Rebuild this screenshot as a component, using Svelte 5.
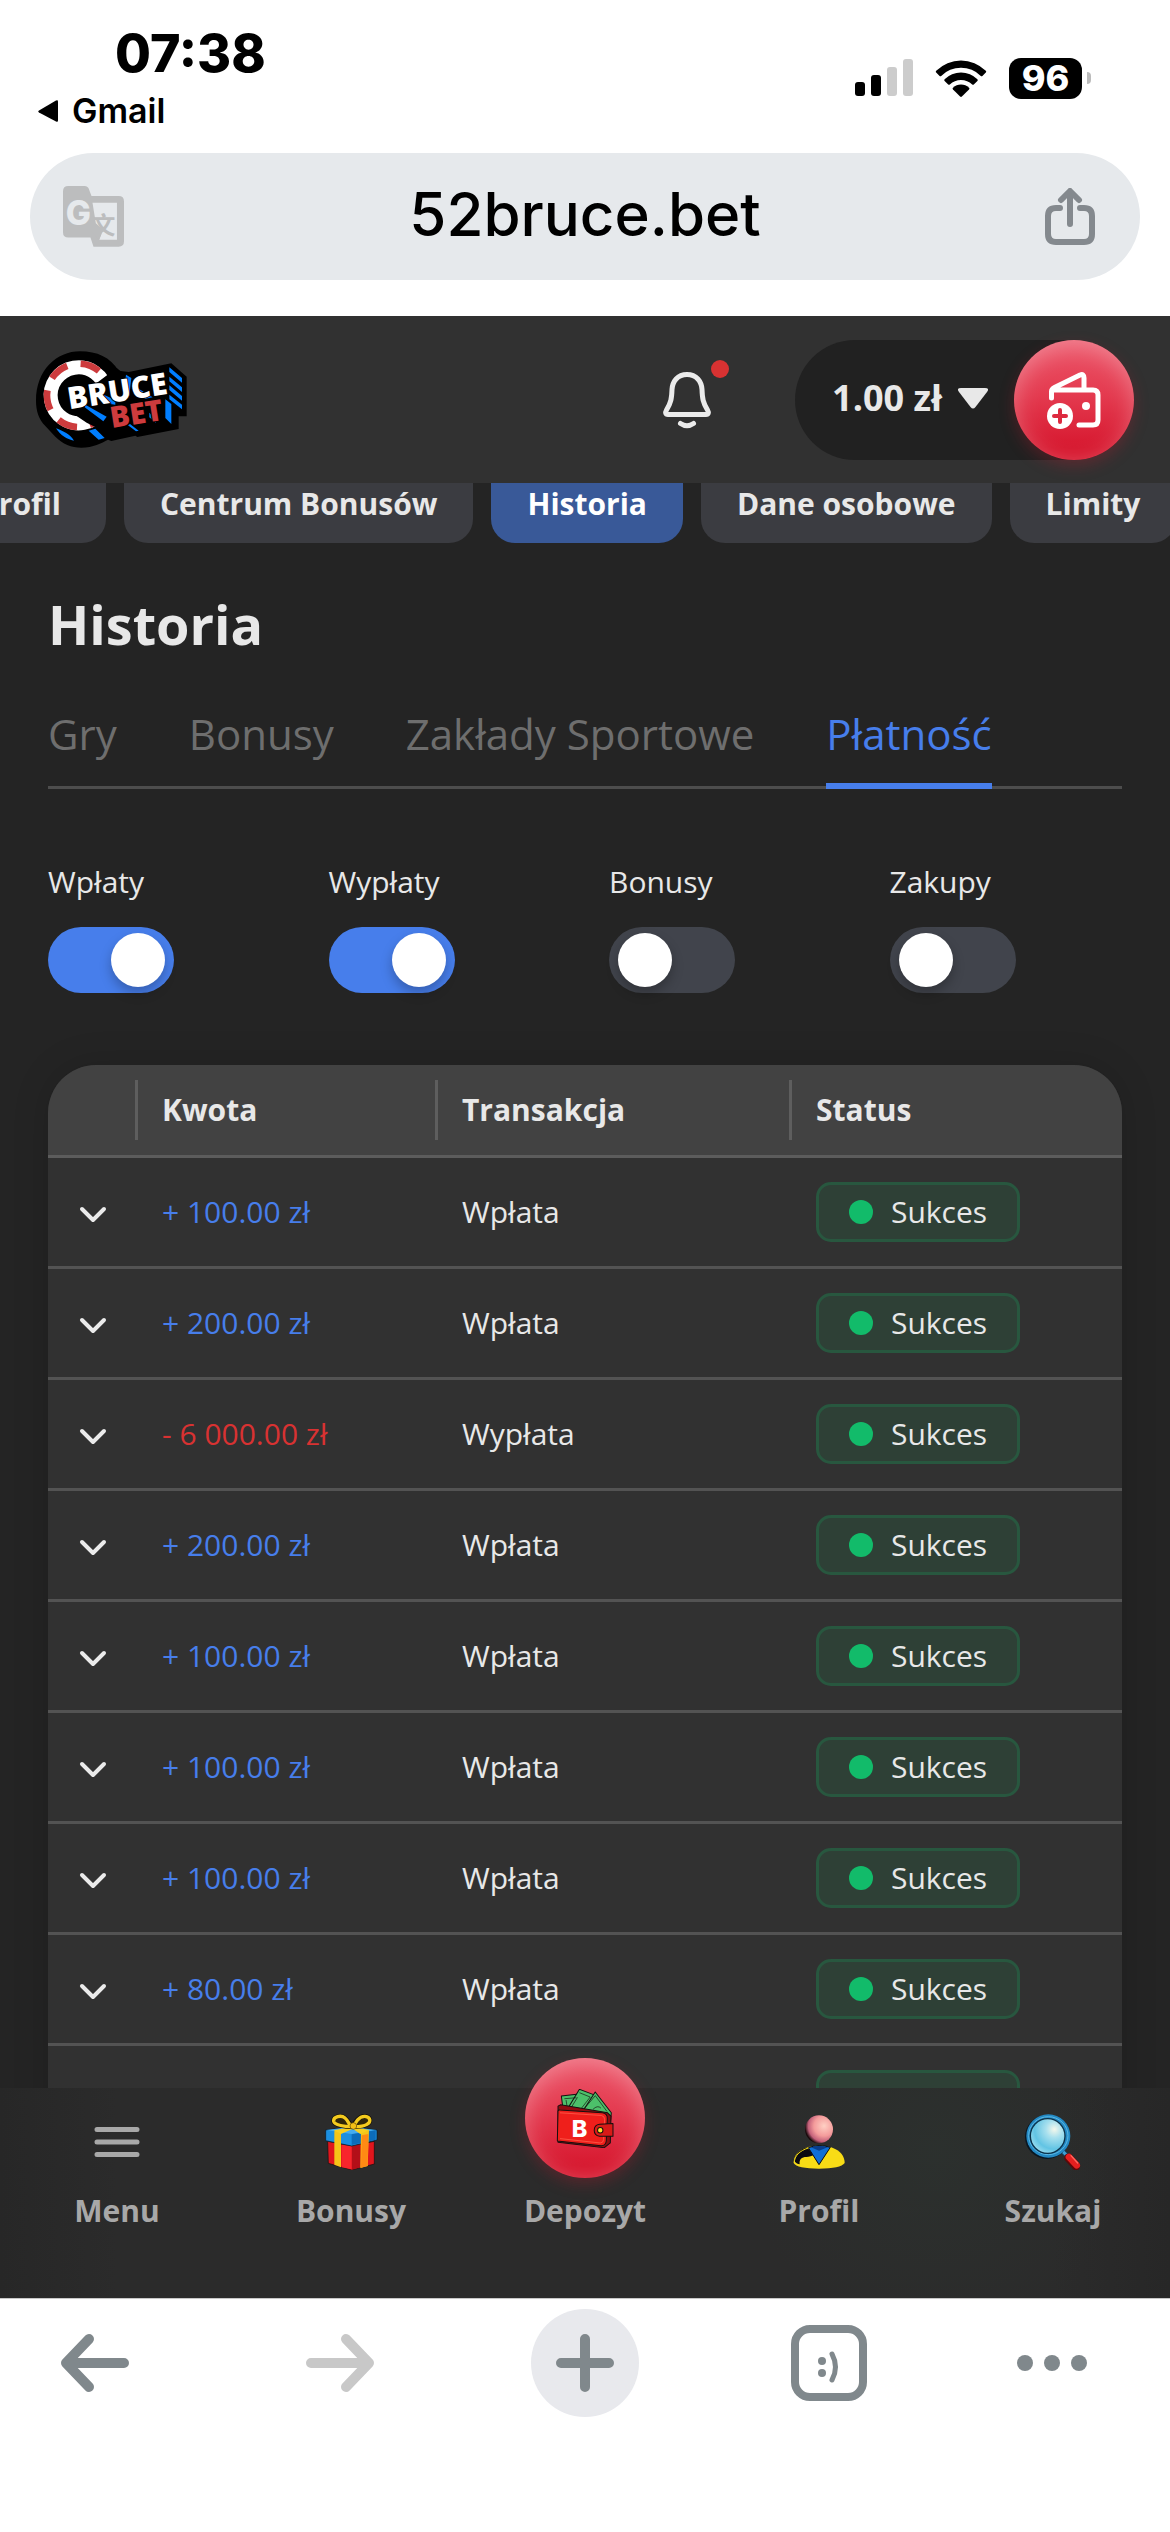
<script>
  const sections = ['Profil', 'Centrum Bonusów', 'Historia', 'Dane osobowe', 'Limity'];
  const tabs = ['Gry', 'Bonusy', 'Zakłady Sportowe', 'Płatność'];
  let filters = $state([
    { id: 'deposits', label: 'Wpłaty', on: true },
    { id: 'withdrawals', label: 'Wypłaty', on: true },
    { id: 'bonuses', label: 'Bonusy', on: false },
    { id: 'purchases', label: 'Zakupy', on: false }
  ]);
  const rows = [
    { amount: '+ 100.00 zł', type: 'Wpłata' },
    { amount: '+ 200.00 zł', type: 'Wpłata' },
    { amount: '- 6 000.00 zł', type: 'Wypłata' },
    { amount: '+ 200.00 zł', type: 'Wpłata' },
    { amount: '+ 100.00 zł', type: 'Wpłata' },
    { amount: '+ 100.00 zł', type: 'Wpłata' },
    { amount: '+ 100.00 zł', type: 'Wpłata' },
    { amount: '+ 80.00 zł', type: 'Wpłata' },
    { amount: '+ 100.00 zł', type: 'Wpłata' }
  ];
</script>

<div class="screen">
  <div class="status">
    <div class="status-left">
      <time>07:38</time>
      <a class="back-app" href="#gmail">
        <svg width="22" height="22" viewBox="0 0 22 22" aria-hidden="true"><path d="M20 1.500v19q0 2-2 1L1 12.500q-1.500-1 0-2L18 .5q2-1 2 1z" /></svg>
        Gmail
      </a>
    </div>
    <div class="status-right">
      <svg width="58" height="38" viewBox="0 0 58 38" aria-hidden="true">
        <rect x="0" y="23" width="10" height="14" rx="3" />
        <rect x="16" y="16" width="10" height="21" rx="3" />
        <rect x="32" y="8" width="10" height="29" rx="3" fill="#ccc" />
        <rect x="48" y="0" width="10" height="37" rx="3" fill="#ccc" />
      </svg>
      <svg width="52" height="38" viewBox="0 0 52 38" aria-hidden="true">
        <path d="M1.200 11.800a35 35 0 0 1 49.600 0q.8.900 0 1.700l-3.400 3.400q-.8.700-1.600 0a28 28 0 0 0-39.600 0q-.8.700-1.600 0l-3.400-3.400q-.8-.8 0-1.700z" />
        <path d="M9.600 20.300a23.200 23.200 0 0 1 32.800 0q.8.900 0 1.700l-3.600 3.500q-.8.700-1.600 0a16 16 0 0 0-22.400 0q-.8.700-1.600 0L9.600 22q-.8-.8 0-1.700z" />
        <path d="M18 28.700a11.500 11.500 0 0 1 16 0q.9.900 0 1.800l-7.100 7q-.9.800-1.800 0l-7.100-7q-.9-.9 0-1.800z" />
      </svg>
      <div class="battery"><span>96</span></div>
    </div>
  </div>

  <div class="address">
    <button class="plain" aria-label="Translate">
      <svg width="61" height="61" viewBox="38 47 182 182" aria-hidden="true">
        <path fill="#bcbdbe" d="M54 47h48q11 0 14 11l7 19h81q16 0 16 16v119q0 16-16 16h-75l-9-27H54q-16 0-16-16V63q0-16 16-16z" />
        <path fill="#e6e9ec" d="M126 97h73v110h-53l12-29-22-20z" />
        <text class="cjk" x="122" y="189" font-size="72" fill="#bcbdbe">文</text>
        <path fill="#bcbdbe" d="M120 180h30l2 10-6 17z" />
        <text class="glyph" x="46" y="162" font-size="100" fill="#e6e9ec">G</text>
      </svg>
    </button>
    <span class="url">52bruce.bet</span>
    <button class="plain share" aria-label="Share">
      <svg width="52" height="58" viewBox="0 0 52 58" fill="none" stroke="#84898e" stroke-width="6" stroke-linecap="round" stroke-linejoin="round" aria-hidden="true">
        <path d="M26 36V4M17 12l9-9 9 9M16 20h-4q-8 0-8 8v18q0 8 8 8h28q8 0 8-8V28q0-8-8-8h-4" />
      </svg>
    </button>
  </div>

  <div class="site">
    <header>
      <a class="logo" href="#home" aria-label="Bruce Bet">
        <svg width="151" height="97" viewBox="48 61 453 291" aria-hidden="true">
          <path d="M180 62c-70 0-132 56-132 148 0 30 8 56 28 76l30 32c22 22 48 33 78 33 36 0 60-14 80-24l10 4 72-16 6 4 124-24v-38h24V138l-46-40-128 26-30-4C270 80 232 62 180 62z" />
          <circle cx="176" cy="194" r="84" fill="none" stroke="#fff" stroke-width="42" stroke-dasharray="468 60" transform="rotate(35 176 194)" />
          <circle cx="176" cy="194" r="95" fill="none" stroke="#cd3b3d" stroke-width="20" stroke-dasharray="60 39" stroke-dashoffset="60" transform="rotate(-110 176 194)" />
          <path d="M210 172l80-60 30 24 110-20 10 140-180 50-60-30-60-40z" />
          <path fill="#007eff" d="M108 293c22 8 42 18 54 37-22-4-40-16-54-37zM206 300l20-6 28 28-18 5zM196 222l64 36-10 14-56-42zM246 190l40 18v14l-30-4zM318 132l16 10-6 54-14-30zM348 170l50 30-22 4-30-16zM448 110l38 32v14l-38-32zM448 138l38 32v14l-38-32zM448 164l38 32v14l-38-32zM448 192l38 30v14l-38-30zM436 206l18 14v60l-18-18zM388 246l20 18v12l-20-16zM330 280l26 20-8 2-24-18z" />
          <g class="mark" stroke="#000" stroke-width="5" paint-order="stroke">
            <text x="0" y="0" font-size="91" fill="#fff" transform="translate(148 236) rotate(-9)">BRUCE</text>
            <text x="0" y="0" font-size="88" fill="#cd3b3d" transform="translate(275 292) rotate(-9)">BET</text>
          </g>
        </svg>
      </a>
      <button class="plain bell" aria-label="Powiadomienia">
        <svg width="50" height="58" viewBox="0 0 50 58" fill="none" stroke="#ebebeb" stroke-width="5" stroke-linecap="round" stroke-linejoin="round" aria-hidden="true">
          <path d="M25 3.500c-9.500 0-14.500 7-15 15-.3 9-1 13-5.500 20.500-1.500 2.600-1 4.500 1.500 4.500h38c2.500 0 3-1.900 1.500-4.500C41 31.500 40.300 27.500 40 18.500c-.5-8-5.500-15-15-15z" />
          <path d="M18.500 52.500q6.500 4.500 13 0" />
        </svg>
        <i></i>
      </button>
      <div class="balance">
        <button class="plain sum">
          1.00 zł
          <svg width="30" height="21" viewBox="0 0 30 21" aria-hidden="true"><path fill="#e8e8e8" d="M3 0h24q5 0 2 4L17.500 19q-2.500 3-5 0L1 4q-3-4 2-4z" /></svg>
        </button>
        <button class="red" aria-label="Wpłać">
          <svg width="56" height="58" viewBox="0 0 56 58" fill="none" stroke="#fff" stroke-width="5" stroke-linecap="round" stroke-linejoin="round" aria-hidden="true">
            <path d="M5.500 27v-6.500q0-2.500 3-4L34 4q4-1.500 4 3v11M6 19h41q5 0 5 5v25q0 5-5 5H33" />
            <circle cx="40" cy="35" r="4" fill="#fff" stroke="none" />
            <circle cx="14" cy="45" r="13" fill="#fff" stroke="none" />
            <path stroke="#dd2a40" stroke-width="4" d="M14 39v12M8 45h12" />
          </svg>
        </button>
      </div>
    </header>

    <main>
      <nav class="sections">
        {#each sections as name}
          <a href="#section" class:active={name === 'Historia'}>{name}</a>
        {/each}
      </nav>

      <div class="content">
        <h1>Historia</h1>
        <nav class="tabs">
          {#each tabs as name}
            <a href="#tab" class:active={name === 'Płatność'}>{name}</a>
          {/each}
        </nav>

        <div class="filters">
          {#each filters as filter}
            <div class="filter">
              <label for={filter.id}>{filter.label}</label>
              <input id={filter.id} type="checkbox" role="switch" bind:checked={filter.on} />
            </div>
          {/each}
        </div>

        <div class="card">
          <table>
            <colgroup><col class="c1" /><col class="c2" /><col class="c3" /><col /></colgroup>
            <thead>
              <tr><th aria-label="Szczegóły"></th><th>Kwota</th><th>Transakcja</th><th>Status</th></tr>
            </thead>
            <tbody>
              {#each rows as row}
                <tr>
                  <td class="toggle">
                    <button class="plain" aria-label="Rozwiń">
                      <svg width="28" height="18" viewBox="0 0 28 18" fill="none" stroke="#ebebeb" stroke-width="4" stroke-linecap="round" stroke-linejoin="round" aria-hidden="true"><path d="M3 4l11 11L25 4" /></svg>
                    </button>
                  </td>
                  <td class={row.amount.startsWith('-') ? 'minus' : 'plus'}>{row.amount}</td>
                  <td>{row.type}</td>
                  <td><span class="badge"><i></i>Sukces</span></td>
                </tr>
              {/each}
            </tbody>
          </table>
        </div>
      </div>
    </main>

    <nav class="dock">
      <a href="#menu">
        <svg width="56" height="56" viewBox="0 0 56 56" stroke="#a8a8a8" stroke-width="5" stroke-linecap="round" aria-hidden="true"><path d="M8 15.500h40M8 28h40M8 40.500h40" /></svg>
        Menu
      </a>
      <a href="#bonusy">
        <svg width="56" height="56" viewBox="42 192 168 168" stroke-linejoin="round" aria-hidden="true">
          <path fill="#e0161d" stroke="#111" stroke-width="2" d="M56 274l72 14 68-14v68l-68 18-70-20z" />
          <path fill="#b30f18" d="M128 288l26-6v70l-26 7z" />
          <path fill="#f8252c" d="M98 284l30 5v69l-30-6z" />
          <path fill="#1b8fe0" stroke="#0a1520" stroke-width="2" d="M50 240l76-10 78 10v30l-76 18-78-16z" />
          <path fill="#45adf0" d="M52 240l74-9 76 9-74 12z" />
          <path fill="#0c6cba" d="M128 253l72-12v28l-72 16z" />
          <path fill="#f5c518" d="M76 244l20-6v114l-20-8zM156 244l24-4-4 108-22 6z" />
          <path fill="#ff8a14" d="M158 256l20-4-2 96-20 5z" />
          <path fill="#f7cf1f" d="M74 241l54-10 14 1-46 20zM138 231l42 9-26 12-26-18z" />
          <path fill="none" stroke="#15110a" stroke-width="14" d="M128 230c-16 0-52-4-54-16-2-14 22-20 34-10 8 6 14 18 20 26zM134 230c0-10 16-32 34-31 18 2 18 18 6 24-12 7-26 7-40 7z" />
          <path fill="#302709" stroke="#f4cb1e" stroke-width="10" d="M126 230c-16 0-50-4-52-16-2-14 22-20 34-10 8 6 12 18 18 26zM136 230c0-10 14-32 32-31 18 2 18 18 6 24-12 7-24 7-38 7z" />
          <circle cx="133" cy="228" r="10" fill="#f3bf16" stroke="#5c4300" stroke-width="2" />
        </svg>
        Bonusy
      </a>
      <a href="#depozyt">
        <span class="red raised">
          <svg width="59" height="59" viewBox="738 117 176 176" stroke="#151010" stroke-width="3" stroke-linejoin="round" aria-hidden="true">
            <g fill="#4cc06a">
              <path d="M754 138l52-6 10 54h-56z" />
              <path d="M808 118l48 18-20 54-66-10z" />
              <path d="M855 126l48 62-2 22-84-26z" />
              <path fill="none" stroke-width="2" d="M763 146l36-3M808 128l32 13-28 36M856 138l34 46M780 178l22-36M822 176l34-40M768 150l4 26M848 178q14-14 24-4" />
            </g>
            <path fill="#8f0c10" d="M744 168l8-4 140 24 10 10-2 80-18 14-138-16z" />
            <path fill="#ef1f1b" d="M744 184q0-5 6-4l126 8q16 2 15 18l-3 66q-2 15-16 14l-130-14z" />
            <path fill="none" stroke="#ff6a55" stroke-width="2" d="M750 188l124 8q9 2 9 12l-3 60q-1 10-10 10l-120-13" />
            <path fill="#d81a17" d="M908 220v38h-40q-16-2-16-18t16-18z" />
            <circle cx="870" cy="240" r="8" fill="#ffe32e" />
            <text class="glyph" x="785" y="259" font-size="70" fill="#fff" stroke="none">B</text>
          </svg>
        </span>
        Depozyt
      </a>
      <a href="#profil">
        <svg width="56" height="56" viewBox="64 101 168 168" aria-hidden="true">
          <defs>
            <radialGradient id="head" cx=".68" cy=".38" r=".72"><stop offset="0" stop-color="#ffd0c4" /><stop offset=".5" stop-color="#f49b9b" /><stop offset=".78" stop-color="#c2607a" /><stop offset=".95" stop-color="#1a0a0c" /></radialGradient>
          </defs>
          <circle cx="148" cy="147" r="42" fill="url(#head)" />
          <path fill="#f8dc16" d="M72 248c0-24 18-52 76-52s77 28 77 52c-8 11-34 17-77 17s-70-6-76-17z" />
          <path fill="#0b0b10" d="M112 201c-22 6-36 22-38 42 6 6 10 8 16 9-2-16 6-22 20-22 8 0 18-4 24-6z" />
          <path fill="#0f6fd6" stroke="#0b0b10" stroke-width="3" d="M116 202q32-12 66-1l-34 52z" />
          <path fill="#0a3d8a" d="M124 201q24-8 50 0l-26 10z" />
          <path fill="none" stroke="#f8dc16" stroke-width="3" d="M116 203c-26 8-42 24-42 44" />
        </svg>
        Profil
      </a>
      <a href="#szukaj">
        <svg width="56" height="56" viewBox="766 101 168 168" aria-hidden="true">
          <defs>
            <radialGradient id="lens" cx=".7" cy=".3" r=".85"><stop offset="0" stop-color="#f4f8ec" /><stop offset=".3" stop-color="#a8e0ee" /><stop offset=".7" stop-color="#62c4e4" /><stop offset="1" stop-color="#a5e2f2" /></radialGradient>
          </defs>
          <path stroke="#15384f" stroke-width="16" d="M874 208l20 20" />
          <path stroke="#3c9fd4" stroke-width="9" d="M874 208l20 20" />
          <path stroke="#5b0909" stroke-width="25" stroke-linecap="round" d="M896 232l23 26" />
          <path stroke="#e51f1f" stroke-width="20" stroke-linecap="round" d="M898 230l23 25" />
          <path stroke="#ff6a60" stroke-width="4" stroke-linecap="round" d="M904 226l20 22" />
          <ellipse cx="832" cy="170" rx="66" ry="66" fill="#091722" />
          <ellipse cx="836" cy="167" rx="66" ry="65" fill="#2389c4" />
          <ellipse cx="836" cy="166" rx="59" ry="57" fill="none" stroke="#5bb7e2" stroke-width="3" />
          <ellipse cx="834" cy="167" rx="54" ry="54" fill="#0c3149" />
          <ellipse cx="834" cy="167" rx="50" ry="50" fill="url(#lens)" />
        </svg>
        Szukaj
      </a>
    </nav>
  </div>

  <div class="toolbar">
    <button class="plain tool" aria-label="Back">
      <svg width="70" height="58" viewBox="0 0 70 58" fill="none" stroke="#80888c" stroke-width="10" stroke-linecap="round" stroke-linejoin="round" aria-hidden="true"><path d="M64 29H7M29 5L6 29l23 24" /></svg>
    </button>
    <button class="plain tool" aria-label="Forward" disabled>
      <svg width="70" height="58" viewBox="0 0 70 58" fill="none" stroke="#c8c8c8" stroke-width="10" stroke-linecap="round" stroke-linejoin="round" aria-hidden="true"><path d="M6 29h57M41 5l23 24-23 24" /></svg>
    </button>
    <button class="plain tool add" aria-label="New tab">
      <svg width="58" height="58" viewBox="0 0 58 58" stroke="#80888c" stroke-width="10" stroke-linecap="round" aria-hidden="true"><path d="M5 29h48M29 5v48" /></svg>
    </button>
    <button class="plain tool" aria-label="Tabs">
      <svg width="76" height="76" viewBox="0 0 76 76" fill="none" stroke="#80888c" aria-hidden="true">
        <rect x="4" y="4" width="68" height="68" rx="15" stroke-width="8" />
        <circle cx="31" cy="36" r="4" fill="#80888c" stroke="none" />
        <circle cx="31" cy="48" r="4" fill="#80888c" stroke="none" />
        <path d="M41 29q7 13 0 26" stroke-width="5" stroke-linecap="round" />
      </svg>
    </button>
    <button class="plain tool more" aria-label="More">
      <svg width="70" height="18" viewBox="0 0 70 18" fill="#80888c" aria-hidden="true"><circle cx="8" cy="9" r="8" /><circle cx="35" cy="9" r="8" /><circle cx="62" cy="9" r="8" /></svg>
    </button>
  </div>
</div>

<style>
  :global(body) { background: #fff; }
  .screen {
    display: flex;
    flex-direction: column;
    height: 100vh;
    overflow: hidden;
    box-sizing: border-box;
    font-family: "Open Sans", "Noto Sans", sans-serif;
    font-size: 30px;
    line-height: 42px;
    color: #e8e8e8;
  }
  .screen * { box-sizing: border-box; }
  svg { display: block; flex: none; }
  a { color: inherit; text-decoration: none; }
  .plain {
    display: flex;
    align-items: center;
    justify-content: center;
    padding: 0;
    border: 0;
    background: none;
    font: inherit;
    color: inherit;
  }

  .status {
    display: flex;
    justify-content: space-between;
    padding: 24px 79px 21px 38px;
    font-family: Inter, "Liberation Sans", sans-serif;
    color: #000;
  }
  .status-left { display: flex; flex-direction: column; gap: 6px; }
  time { padding-left: 77px; font-size: 52px; line-height: 60px; font-weight: 800; }
  .back-app { display: flex; align-items: center; gap: 12px; font-size: 34px; font-weight: 600; }
  .status-right { display: flex; align-items: center; gap: 22px; }
  .battery { display: flex; align-items: center; gap: 5px; }
  .battery span {
    width: 73px;
    border-radius: 12px;
    background: #000;
    color: #fff;
    font-size: 36px;
    line-height: 41px;
    font-weight: 800;
    text-align: center;
  }
  .battery::after { content: ""; width: 4px; height: 12px; border-radius: 0 4px 4px 0; background: #bbb; }

  .address {
    display: grid;
    grid-template-columns: 1fr auto 1fr;
    align-items: center;
    justify-items: start;
    height: 127px;
    margin: 0 30px 36px;
    padding: 0 33px;
    border-radius: 64px;
    background: #e6e9ec;
    flex: none;
  }
  .url { padding-bottom: 6px; font-family: Inter, "Liberation Sans", sans-serif; font-size: 60px; line-height: 72px; font-weight: 500; color: #000; }
  .share { justify-self: end; margin-right: 11px; }
  .cjk { font-family: "Noto Sans CJK SC", sans-serif; font-weight: 700; }
  .glyph { font-family: Inter, sans-serif; font-weight: 800; }
  .mark { font-family: "Open Sans", sans-serif; font-weight: 800; }

  .site {
    display: flex;
    flex-direction: column;
    flex: 1;
    min-height: 0;
    background: #242424;
  }
  header {
    display: flex;
    align-items: center;
    height: 167px;
    padding: 0 36px;
    background: #313131;
    flex: none;
  }
  .logo { margin-right: auto; }
  .bell { position: relative; margin-right: 83px; }
  .bell i { position: absolute; top: -11px; right: -17px; width: 18px; height: 18px; border-radius: 50%; background: #d83232; }
  .balance { display: flex; align-items: center; gap: 26px; padding-left: 37px; border-radius: 60px; background: #212121; }
  .sum { gap: 16px; padding-bottom: 3px; font-size: 36px; line-height: 48px; font-weight: 700; }
  .red {
    display: flex;
    align-items: center;
    justify-content: center;
    width: 120px;
    height: 120px;
    padding: 0;
    border: 0;
    border-radius: 50%;
    background: linear-gradient(#ec5468, #e43b50 45%, #d7182f 90%);
    box-shadow: inset 0 6px 24px rgba(255, 255, 255, 0.3), 0 6px 15px rgba(215, 24, 47, 0.25);
  }

  main { flex: 1; min-height: 0; overflow: hidden; }
  .sections { display: flex; gap: 18px; margin-left: -56px; }
  .sections a {
    flex: none;
    padding: 0 36px 18px;
    border-radius: 0 0 24px 24px;
    background: #3b3c41;
    font-weight: 700;
  }
  .sections a:first-child { padding-right: 45px; }
  .sections .active { background: #395998; color: #fff; }
  .content { padding: 45px 48px 0; }
  h1 { margin: 0 0 44px; font-size: 54px; line-height: 72px; font-weight: 700; }
  .tabs { display: flex; gap: 72px; box-shadow: inset 0 -3px #4d4d4d; font-size: 42px; line-height: 60px; color: #6e6e6e; }
  .tabs a { padding-bottom: 19px; border-bottom: 6px solid transparent; }
  .tabs .active { color: #477eeb; border-color: #477eeb; }

  .filters { display: grid; grid-template-columns: repeat(4, 1fr); gap: 48px; margin: 72px 0; }
  .filter { display: flex; flex-direction: column; gap: 24px; }
  input {
    appearance: none;
    display: flex;
    align-items: center;
    width: 126px;
    height: 66px;
    margin: 0;
    padding: 0 9px;
    border-radius: 33px;
    background: #41444c;
  }
  input::before { content: ""; width: 54px; height: 54px; border-radius: 50%; background: #fff; box-shadow: 0 6px 12px rgba(0, 0, 0, 0.25); }
  input:checked { justify-content: flex-end; background: #477eeb; }

  .card { border-radius: 48px; overflow: hidden; background: #313131; box-shadow: 0 0 36px rgba(0, 0, 0, 0.15); }
  table { width: 100%; table-layout: fixed; border-spacing: 0; }
  .c1 { width: 90px; }
  .c2 { width: 300px; }
  .c3 { width: 354px; }
  th, td { padding: 24px; text-align: left; border-bottom: 3px solid #535353; }
  th { background: #424242; border-color: #5c5c5c; font-weight: 700; }
  th:not(:last-child) { background: linear-gradient(#5e5e5e, #5e5e5e) no-repeat right center / 3px 60px #424242; }
  .toggle { padding: 4px 0 0 31px; }
  .plus { color: #477eeb; }
  .minus { color: #d83232; }
  .badge {
    display: flex;
    align-items: center;
    gap: 18px;
    width: max-content;
    height: 60px;
    padding: 0 30px;
    border: 3px solid #28573f;
    border-radius: 15px;
    background: #2e4036;
  }
  .badge i { width: 24px; height: 24px; border-radius: 50%; background: #12bb6a; }

  .dock {
    display: grid;
    grid-template-columns: repeat(5, 1fr);
    padding: 26px 0 66px;
    background:
      radial-gradient(circle at 80% 30%, rgba(46, 64, 54, 0.25), transparent 20%),
      linear-gradient(90deg, #272727, #2b2b2b 10%, #2b2b2b 90%, #272727);
    color: #a8a8a8;
    font-weight: 700;
    position: relative;
    flex: none;
  }
  .dock a { display: flex; flex-direction: column; align-items: center; gap: 20px; }
  .dock .raised { margin: -56px 0 -8px; }

  .toolbar {
    display: flex;
    justify-content: space-between;
    padding: 10px 86px 115px 41px;
    border-top: 1px solid #c8c8c8;
    background: #fff;
    flex: none;
  }
  .tool { width: 108px; height: 108px; border-radius: 50%; }
  .add { background: #e8e9ed; }
  .more { width: 64px; }
</style>
